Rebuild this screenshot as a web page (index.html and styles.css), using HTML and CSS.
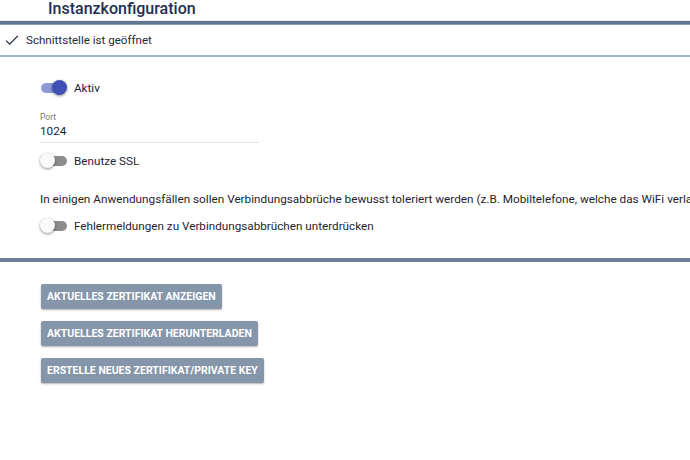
FILE: index.html
```html
<!DOCTYPE html>
<html lang="de">
<head>
<meta charset="utf-8">
<link rel="stylesheet" href="styles.css">
</head>
<body>
<div class="page">
  <div class="title">Instanzkonfiguration</div>
  <div class="status">
    <svg class="check" width="14" height="14" viewBox="0 0 24 24"><path d="M2 13 L8 19 L22 5" fill="none" stroke="#222c3c" stroke-width="2.2"/></svg>
    <span>Schnittstelle ist geöffnet</span>
  </div>
  <div class="settings">
    <label class="toggle-row"><span class="switch on"><span class="track"></span><span class="thumb"></span></span><span>Aktiv</span></label>
    <div class="field">
      <div class="field-label">Port</div>
      <div class="field-value">1024</div>
    </div>
    <label class="toggle-row"><span class="switch"><span class="track"></span><span class="thumb"></span></span><span>Benutze SSL</span></label>
    <p class="note">In einigen Anwendungsfällen sollen Verbindungsabbrüche bewusst toleriert werden (z.B. Mobiltelefone, welche das WiFi verlassen)</p>
    <label class="toggle-row"><span class="switch"><span class="track"></span><span class="thumb"></span></span><span>Fehlermeldungen zu Verbindungsabbrüchen unterdrücken</span></label>
  </div>
  <div class="actions">
    <button class="btn">Aktuelles Zertifikat anzeigen</button>
    <button class="btn">Aktuelles Zertifikat herunterladen</button>
    <button class="btn">Erstelle neues Zertifikat/Private Key</button>
  </div>
</div>
</body>
</html>
```
FILE: styles.css
```css
html, body { margin: 0; padding: 0; background: #fff; }
body { font-family: Roboto, "Liberation Sans", sans-serif; color: #1f2430; overflow: hidden; width: 690px; height: 460px; }
.page { width: 690px; }
.title {
  padding-left: 48px;
  font-size: 16px;
  font-weight: 500;
  color: #1d2f52;
  height: 20px;
  line-height: 18px;
  border-bottom: 1px solid #e6e9ee;
}
.status {
  border-top: 3px solid #5f7690;
  box-shadow: inset 0 1px 0 #8ea0b5;
  display: flex;
  align-items: center;
  height: 31px;
  padding-left: 5px;
  font-size: 11.6px;
  color: #1f2838;
  border-bottom: 2px solid #a3b1c3;
}
.check { margin-right: 7px; }
.settings {
  padding: 22px 0 0 40px;
  height: 179px;
  border-bottom: 4px solid #6b8098;
  box-sizing: content-box;
  white-space: nowrap;
  overflow: hidden;
}
.toggle-row {
  display: flex;
  align-items: center;
  font-size: 11.7px;
  height: 18px;
}
.switch { position: relative; width: 28px; height: 18px; margin-right: 6px; }
.track {
  position: absolute; left: 2px; top: 4px; width: 25px; height: 10px;
  border-radius: 5px; background: #8c8c8c;
}
.thumb {
  position: absolute; left: 0; top: 1px; width: 15px; height: 15px; border-radius: 50%;
  background: #fafafa; box-shadow: 0 1px 3px rgba(0,0,0,0.45);
}
.switch.on .track { left: 1px; width: 22px; background: #8d9ad8; }
.switch.on .thumb { left: 12px; background: #3f51b5; }
.field { margin-top: 15px; width: 219px; border-bottom: 1px solid #e2e2e2; padding-bottom: 3px; }
.field-label { font-size: 8.5px; color: #7a7a7a; line-height: 10px; }
.field-value { font-size: 11.7px; line-height: 16px; margin-top: 1px; }
.field + .toggle-row { margin-top: 9px; }
.note { margin: 21px 0 10px 0; font-size: 11.75px; line-height: 16px; }
.actions {
  padding: 22px 0 0 41px;
  display: flex;
  flex-direction: column;
  align-items: flex-start;
  gap: 12px;
}
.btn {
  font-family: Roboto, "Liberation Sans", sans-serif;
  text-transform: uppercase;
  font-weight: 700;
  font-size: 10.5px;
  color: #fff;
  background: #8596ab;
  border: none;
  border-radius: 2px;
  height: 25px;
  padding: 0 6px;
  box-shadow: 0 1px 2px rgba(0,0,0,0.3);
}
```
